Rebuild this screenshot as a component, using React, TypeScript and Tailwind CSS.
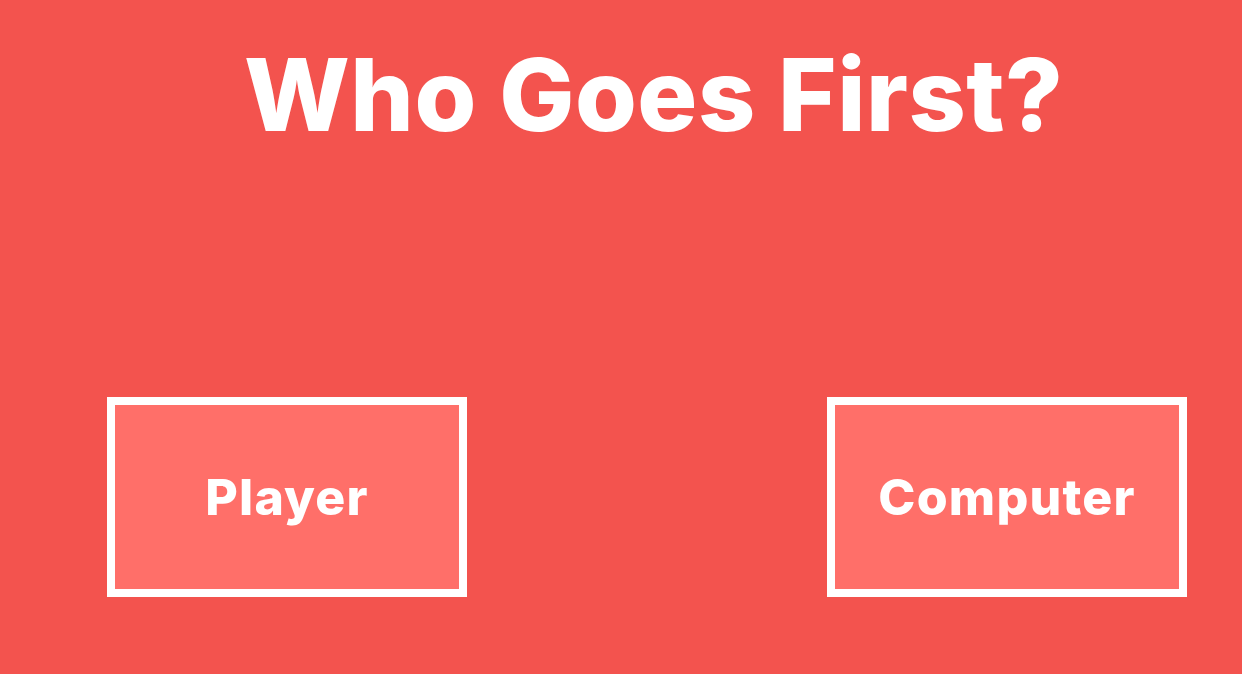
export default function App() {
  return (
    <main className="w-[1242px] h-[674px] overflow-hidden bg-[#f3534e] flex flex-col font-['Inter','Noto_Sans',sans-serif] text-white">
      <h1 className="pl-[244px] pt-[40px] text-[100px] leading-[110px] font-extrabold tracking-[0.5px] whitespace-nowrap">Who Goes First?</h1>
      <section className="flex gap-[360px] pl-[107px] mt-[247px]">
        <button className="w-[360px] h-[200px] border-[8px] border-white bg-[#ff6f69] text-[50px] font-extrabold tracking-[1.2px] flex items-center justify-center">Player</button>
        <button className="w-[360px] h-[200px] border-[8px] border-white bg-[#ff6f69] text-[50px] font-extrabold tracking-[1.2px] flex items-center justify-center">Computer</button>
      </section>
    </main>
  );
}
